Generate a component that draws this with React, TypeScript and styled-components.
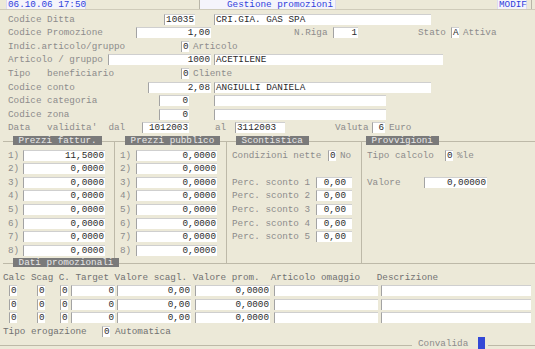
import React from "react";
import styled, { createGlobalStyle } from "styled-components";

const ROW = 13.6;
const LINE = "#bdb9a8";

const GlobalStyle = createGlobalStyle`
  html, body {
    margin: 0;
    padding: 0;
    background: #ece9d8;
  }
  body {
    font-family: "Liberation Mono", "DejaVu Sans Mono", monospace;
    font-size: 9.3px;
  }
`;

const Screen = styled.div`
  width: 535px;
  height: 349px;
  overflow: hidden;
  background: #ece9d8;
  color: #8a8a8a;
  display: flex;
  flex-direction: column;
`;

const TopBar = styled.div`
  height: ${ROW}px;
  flex: none;
`;

const Strip = styled.div`
  height: 9px;
  border-bottom: 1px solid #cfcbba;
  display: flex;
  line-height: 9px;
  color: #2f3fdc;
`;

const HeadBox = styled.div<{ $ml?: number; $w: number; $divider?: boolean }>`
  flex: none;
  margin-left: ${(p) => p.$ml ?? 0}px;
  width: ${(p) => p.$w}px;
  background: #f5f4fb;
  border-left: 1px solid ${(p) => (p.$divider ? "#b8b5a8" : "#dcdaf0")};
  border-right: 1px solid #dcdaf0;
  box-sizing: border-box;
  white-space: pre;
  padding-left: ${(p) => (p.$divider ? 27 : 1)}px;
`;

const EdgeMark = styled.div`
  margin-left: 4px;
  width: 5px;
  border-left: 1px solid #b8b5a8;
`;

const Line = styled.div`
  height: ${ROW}px;
  flex: none;
  display: flex;
  align-items: flex-start;
  white-space: pre;
  line-height: 11px;
`;

const Lbl = styled.span<{ $ml?: number; $w?: number; $dark?: boolean }>`
  flex: none;
  margin-left: ${(p) => p.$ml ?? 0}px;
  width: ${(p) => (p.$w ? `${p.$w}px` : "auto")};
  color: ${(p) => (p.$dark ? "#717171" : "#8c8c8c")};
`;

const Fld = styled.span<{ $ml?: number; $w: number; $right?: boolean; $pr?: number }>`
  flex: none;
  box-sizing: border-box;
  margin-left: ${(p) => p.$ml ?? 0}px;
  width: ${(p) => p.$w}px;
  height: 11px;
  line-height: 10px;
  background: #ffffff;
  color: #2b2b2b;
  border-top: 1px solid #cfcfcf;
  border-left: 1px solid #a3a3a3;
  text-align: ${(p) => (p.$right ? "right" : "left")};
  padding-right: ${(p) => p.$pr ?? 1}px;
  padding-left: 1px;
  overflow: hidden;
`;

const Groups = styled.div`
  height: 127px;
  flex: none;
  display: flex;
`;

const Group = styled.div<{ $ml?: number; $w?: number; $first?: boolean }>`
  box-sizing: border-box;
  margin-top: 5px;
  margin-left: ${(p) => p.$ml ?? 0}px;
  height: 122px;
  ${(p) => (p.$w ? `width: ${p.$w}px; flex: none;` : "flex: 1;")}
  border-top: 1px solid ${LINE};
  border-left: ${(p) => (p.$first ? "none" : `1px solid ${LINE}`)};
  display: flex;
  flex-direction: column;
`;

const TabRow = styled.div`
  height: ${ROW}px;
  margin-top: -6px;
  flex: none;
  display: flex;
`;

const Tab = styled.span<{ $ml: number }>`
  margin-left: ${(p) => p.$ml}px;
  height: 9px;
  line-height: 9px;
  padding: 0 5.58px;
  background: #7a7a7a;
  color: #e8e8e8;
  white-space: pre;
`;

const Promo = styled.div`
  flex: none;
  margin-left: 3px;
  border-top: 1px solid ${LINE};
  display: flex;
  flex-direction: column;
`;

const Footer = styled.div`
  height: 12px;
  margin-top: -2px;
  flex: none;
  display: flex;
  align-items: flex-start;
  line-height: 11px;
`;

const Rule = styled.div<{ $w?: number }>`
  height: 1px;
  margin-top: 7px;
  background: ${LINE};
  ${(p) => (p.$w ? `width: ${p.$w}px; flex: none;` : "flex: 1;")}
`;

const Cursor = styled.div`
  flex: none;
  width: 7px;
  height: 13px;
  margin: -1px 3px 0 10px;
  background: #3348d6;
`;

const prezziFatt = ["11,5000", "0,0000", "0,0000", "0,0000", "0,0000", "0,0000", "0,0000", "0,0000"];
const prezziPubb = ["0,0000", "0,0000", "0,0000", "0,0000", "0,0000", "0,0000", "0,0000", "0,0000"];

const PromoRow = () => (
  <Line>
    <Fld $ml={6} $w={8}>0</Fld>
    <Fld $ml={20} $w={8}>0</Fld>
    <Fld $ml={15} $w={8}>0</Fld>
    <Fld $ml={3} $w={44} $right>0</Fld>
    <Fld $ml={2} $w={74} $right>0,00</Fld>
    <Fld $ml={4} $w={75} $right>0,0000</Fld>
    <Fld $ml={4} $w={104}></Fld>
    <Fld $ml={3} $w={150}></Fld>
  </Line>
);

export default function App() {
  return (
    <>
      <GlobalStyle />
      <Screen>
        <TopBar>
          <Strip>
            <HeadBox $ml={6} $w={80}>06.10.06 17:50</HeadBox>
            <HeadBox $ml={113} $w={137} $divider>Gestione promozioni</HeadBox>
            <HeadBox $ml={161} $w={30}>MODIF</HeadBox>
            <EdgeMark />
          </Strip>
        </TopBar>

        <Line>
          <Lbl $ml={8} $w={156}>Codice Ditta</Lbl>
          <Fld $w={31} $right>10035</Fld>
          <Fld $ml={19} $w={217}>CRI.GIA. GAS SPA</Fld>
        </Line>
        <Line>
          <Lbl $ml={8} $w={128}>Codice Promozione</Lbl>
          <Fld $w={75} $right>1,00</Fld>
          <Lbl $ml={83} $w={39}>N.Riga</Lbl>
          <Fld $w={25} $right>1</Fld>
          <Lbl $ml={60} $w={33}>Stato</Lbl>
          <Fld $w={8}>A</Fld>
          <Lbl $ml={4}>Attiva</Lbl>
        </Line>
        <Line>
          <Lbl $ml={8} $w={173}>Indic.articolo/gruppo</Lbl>
          <Fld $w={8}>0</Fld>
          <Lbl $ml={4}>Articolo</Lbl>
        </Line>
        <Line>
          <Lbl $ml={8} $w={100}>Articolo / gruppo</Lbl>
          <Fld $w={103} $right>1000</Fld>
          <Fld $ml={3} $w={229}>ACETILENE</Fld>
        </Line>
        <Line>
          <Lbl $ml={8} $w={173}>Tipo   beneficiario</Lbl>
          <Fld $w={8}>0</Fld>
          <Lbl $ml={4}>Cliente</Lbl>
        </Line>
        <Line>
          <Lbl $ml={8} $w={140}>Codice conto</Lbl>
          <Fld $w={63} $right>2,08</Fld>
          <Fld $ml={3} $w={217}>ANGIULLI DANIELA</Fld>
        </Line>
        <Line>
          <Lbl $ml={8} $w={151}>Codice categoria</Lbl>
          <Fld $w={30} $right>0</Fld>
          <Fld $ml={25} $w={172}></Fld>
        </Line>
        <Line>
          <Lbl $ml={8} $w={151}>Codice zona</Lbl>
          <Fld $w={30} $right>0</Fld>
          <Fld $ml={25} $w={172}></Fld>
        </Line>
        <Line>
          <Lbl $ml={8} $w={134}>Data   validita'  dal</Lbl>
          <Fld $w={47} $right>1012003</Fld>
          <Lbl $ml={26} $w={20}>al</Lbl>
          <Fld $w={50}>3112003</Fld>
          <Lbl $ml={50} $w={37}>Valuta</Lbl>
          <Fld $w={13} $right>6</Fld>
          <Lbl $ml={4}>Euro</Lbl>
        </Line>

        <Groups>
          <Group $ml={3} $w={111} $first>
            <TabRow>
              <Tab $ml={10}>Prezzi fattur.</Tab>
            </TabRow>
            {prezziFatt.map((v, i) => (
              <Line key={i}>
                <Lbl $ml={5} $w={15}>{`${i + 1})`}</Lbl>
                <Fld $w={82} $right>{v}</Fld>
              </Line>
            ))}
          </Group>
          <Group $w={112}>
            <TabRow>
              <Tab $ml={10}>Prezzi pubblico</Tab>
            </TabRow>
            {prezziPubb.map((v, i) => (
              <Line key={i}>
                <Lbl $ml={5} $w={16}>{`${i + 1})`}</Lbl>
                <Fld $w={81} $right>{v}</Fld>
              </Line>
            ))}
          </Group>
          <Group $w={135}>
            <TabRow>
              <Tab $ml={9}>Scontistica</Tab>
            </TabRow>
            <Line>
              <Lbl $ml={5} $w={96}>Condizioni nette</Lbl>
              <Fld $w={8}>0</Fld>
              <Lbl $ml={4}>No</Lbl>
            </Line>
            <Line />
            {[1, 2, 3, 4, 5].map((n) => (
              <Line key={n}>
                <Lbl $ml={5} $w={84}>{`Perc. sconto ${n}`}</Lbl>
                <Fld $w={36} $right $pr={6}>0,00</Fld>
              </Line>
            ))}
          </Group>
          <Group>
            <TabRow>
              <Tab $ml={4}>Provvigioni</Tab>
            </TabRow>
            <Line>
              <Lbl $ml={5} $w={78}>Tipo calcolo</Lbl>
              <Fld $w={8}>0</Fld>
              <Lbl $ml={4}>%le</Lbl>
            </Line>
            <Line />
            <Line>
              <Lbl $ml={5} $w={57}>Valore</Lbl>
              <Fld $w={63} $right>0,00000</Fld>
            </Line>
          </Group>
        </Groups>

        <Promo>
          <TabRow>
            <Tab $ml={10}>Dati promozionali</Tab>
          </TabRow>
          <Line>
            <Lbl $dark>Calc Scag C. Target Valore scagl. Valore prom.  Articolo omaggio   Descrizione</Lbl>
          </Line>
          <PromoRow />
          <PromoRow />
          <PromoRow />
          <Line>
            <Lbl $w={99} $dark>Tipo erogazione</Lbl>
            <Fld $w={8}>0</Fld>
            <Lbl $ml={5} $dark>Automatica</Lbl>
          </Line>
        </Promo>

        <Footer>
          <Rule $w={412} />
          <Lbl $ml={6}>Convalida</Lbl>
          <Cursor />
          <Rule />
        </Footer>
      </Screen>
    </>
  );
}
